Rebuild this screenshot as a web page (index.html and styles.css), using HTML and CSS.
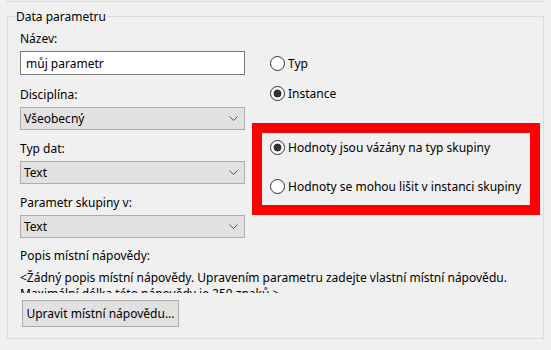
FILE: index.html
```html
<!DOCTYPE html>
<html lang="cs">
<head>
  <meta charset="UTF-8">
  <title>Data parametru</title>
  <link rel="stylesheet" href="styles.css">
</head>
<body>
  <div class="prev-group"></div>

  <fieldset class="group">
    <legend>Data parametru</legend>

    <div class="columns">
      <div class="fields">
        <div class="field field-name">
          <label for="name">Název:</label>
          <input id="name" class="text-input" type="text" value="můj parametr">
        </div>
        <div class="field">
          <label>Disciplína:</label>
          <div class="select">
            <span>Všeobecný</span>
            <svg width="9" height="5" viewBox="0 0 9 5"><path d="M0.5 0.5 L4.5 4.5 L8.5 0.5" fill="none" stroke="#555" stroke-width="1"/></svg>
          </div>
        </div>
        <div class="field">
          <label>Typ dat:</label>
          <div class="select">
            <span>Text</span>
            <svg width="9" height="5" viewBox="0 0 9 5"><path d="M0.5 0.5 L4.5 4.5 L8.5 0.5" fill="none" stroke="#555" stroke-width="1"/></svg>
          </div>
        </div>
        <div class="field field-last">
          <label>Parametr skupiny v:</label>
          <div class="select">
            <span>Text</span>
            <svg width="9" height="5" viewBox="0 0 9 5"><path d="M0.5 0.5 L4.5 4.5 L8.5 0.5" fill="none" stroke="#555" stroke-width="1"/></svg>
          </div>
        </div>
      </div>

      <div class="options">
        <div class="radio-list">
          <label class="radio"><input type="radio" name="kind"> Typ</label>
          <label class="radio"><input type="radio" name="kind" checked> Instance</label>
        </div>
        <div class="highlight">
          <label class="radio"><input type="radio" name="values" checked> Hodnoty jsou vázány na typ skupiny</label>
          <label class="radio"><input type="radio" name="values"> Hodnoty se mohou lišit v instanci skupiny</label>
        </div>
      </div>
    </div>

    <div class="help">
      <div class="help-label">Popis místní nápovědy:</div>
      <div class="help-text">&lt;Žádný popis místní nápovědy. Upravením parametru zadejte vlastní místní nápovědu. Maximální délka této nápovědy je 250 znaků.&gt;</div>
      <button class="btn">Upravit místní nápovědu...</button>
    </div>
  </fieldset>
</body>
</html>
```

FILE: styles.css
```css
body {
  margin: 0;
  background-color: #f0f0f0;
  font-family: "Noto Sans", "DejaVu Sans", sans-serif;
  font-size: 12px;
  line-height: 15px;
  color: #000;
}

.prev-group {
  height: 1px;
  margin: 0 7px;
  border: 1px solid #dcdcdc;
  border-top: none;
}

.group {
  margin: 7px 7px 0;
  padding: 7px 3px 11px 12px;
  border: 1px solid #dcdcdc;
  min-width: 0;
}

.group legend {
  margin-left: -5px;
  padding: 0 1px;
}

.columns {
  display: grid;
  grid-template-columns: 225px 1fr;
  column-gap: 7px;
  align-items: start;
}

.field {
  display: flex;
  flex-direction: column;
  gap: 5px;
  margin-bottom: 11px;
}

.field-name {
  margin-bottom: 12px;
}

.field-last {
  margin-bottom: 10px;
}

.text-input {
  box-sizing: border-box;
  width: 225px;
  height: 24px;
  margin: 0;
  padding: 0 5px;
  border: 1px solid #7a7a7a;
  background-color: #fff;
  font: inherit;
  color: #000;
  outline: none;
}

.select {
  box-sizing: border-box;
  height: 23px;
  display: flex;
  align-items: center;
  justify-content: space-between;
  padding: 0 6px 0 3px;
  border: 1px solid #adadad;
  background-color: #e1e1e1;
}

.options {
  display: flex;
  flex-direction: column;
}

.radio-list {
  display: flex;
  flex-direction: column;
  gap: 15px;
  margin-top: 25px;
  padding-left: 18px;
}

.radio {
  display: flex;
  align-items: center;
  gap: 3px;
  height: 15px;
  white-space: nowrap;
}

.radio input {
  appearance: none;
  width: 15px;
  height: 15px;
  margin: 0;
  border: 1px solid #333;
  border-radius: 50%;
  background-color: #fff;
}

.radio input:checked {
  background: radial-gradient(circle, #333 0 3.6px, #fff 4.3px);
}

.highlight {
  display: flex;
  flex-direction: column;
  gap: 24px;
  margin-top: 22px;
  padding: 7px 0 11px 8px;
  border: 10px solid #ff0000;
}

.help-text {
  height: 23px;
  margin-top: 7px;
  line-height: 16px;
  overflow: hidden;
}

.btn {
  display: block;
  box-sizing: border-box;
  width: 157px;
  height: 27px;
  margin: 7px 0 0 2px;
  padding: 0;
  border: 1px solid #adadad;
  background-color: #e1e1e1;
  font: inherit;
  color: #000;
}
```
